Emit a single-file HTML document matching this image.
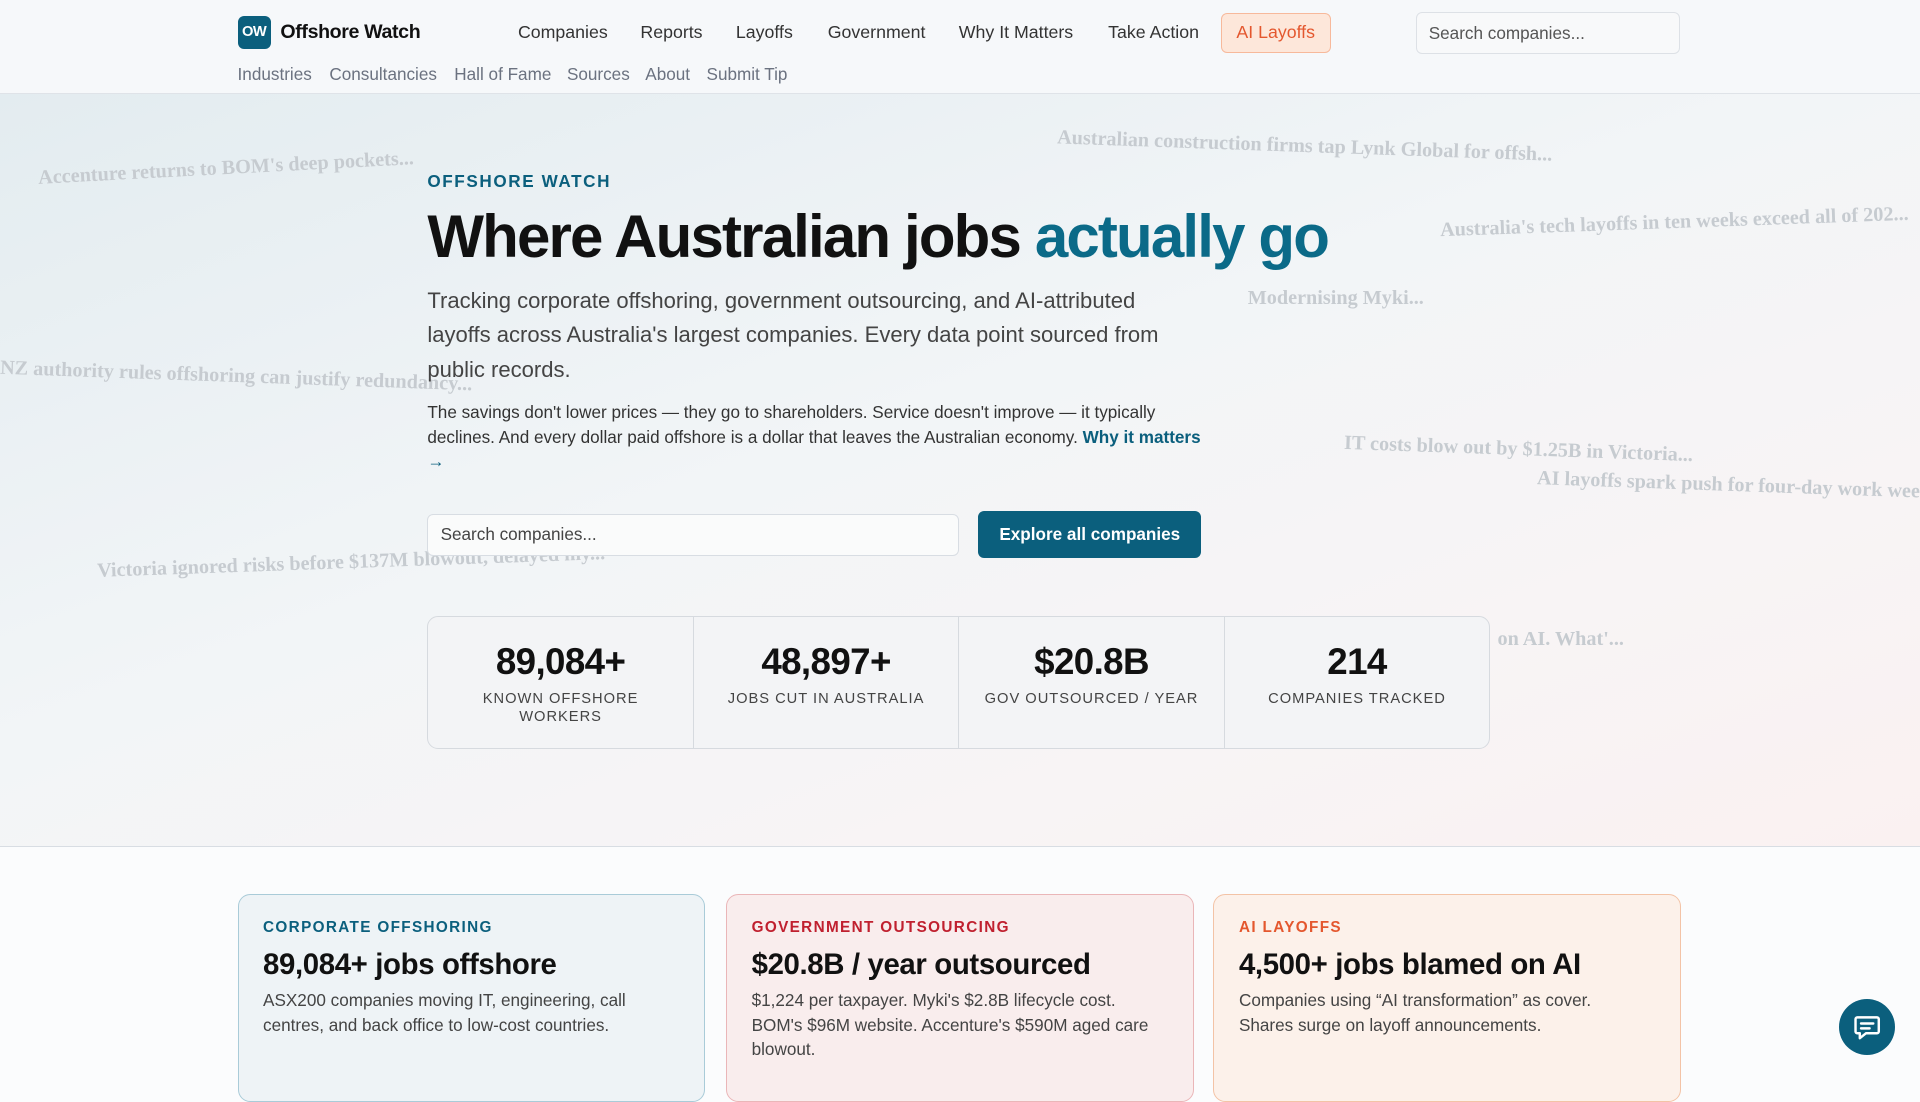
<!DOCTYPE html>
<html><head><meta charset="utf-8"><style>
html{zoom:1.22449}
body{margin:0;width:1568px;height:882px;overflow:hidden;font-family:"Liberation Sans",sans-serif;background:#fbfcfd;color:#111;position:relative}
.nav{position:absolute;left:0;top:0;width:1568px;height:76px;background:#f6f8fa;border-bottom:1px solid #dfe3e8;z-index:3}
.logo{position:absolute;left:194px;top:13px;width:27px;height:27px;border-radius:5px;background:#0b5f7d;color:#fff;font-weight:bold;font-size:12px;line-height:27px;text-align:center;letter-spacing:-.5px}
.brand{position:absolute;left:229px;top:17px;font-weight:bold;font-size:16px;letter-spacing:-.3px}
.m{position:absolute;top:18px;font-size:14.5px;color:#333}
.s{position:absolute;top:52px;font-size:14px;color:#6b7280}
.ai{position:absolute;left:997px;top:11px;width:88px;height:31px;border:1px solid #f7b99b;background:#fde7da;border-radius:5px;color:#e4572e;font-size:14.5px;text-align:center;line-height:30px}
.srch{position:absolute;left:1156px;top:10px;width:216px;height:34px;border:1px solid #dde1e6;border-radius:5px;background:#f8f9fa;font-size:14px;color:#555;line-height:33px;padding-left:10px;box-sizing:border-box}
.hero{position:absolute;left:0;top:77px;width:1568px;height:614px;background:linear-gradient(160deg,#e3ecf0 0%,#f2f5f7 45%,#f8f4f5 75%,#faf1f1 100%);border-bottom:1px solid #d8dde3}
.f{position:absolute;font-family:"Liberation Serif",serif;font-size:16.5px;font-weight:bold;color:#c6cbd0;white-space:nowrap}
.k{position:absolute;left:349px;top:140px;font-size:14px;letter-spacing:1.3px;color:#0b5f7d;font-weight:bold}
h1{position:absolute;left:349px;top:165px;margin:0;font-size:49px;letter-spacing:-1.5px;font-weight:bold}
h1 span{color:#0b6a88}
.p1{position:absolute;left:349px;top:232px;width:628px;font-size:18px;line-height:28px;color:#444}
.p2{position:absolute;left:349px;top:327px;width:651px;font-size:14px;line-height:20px;color:#333}
.p2 a{color:#0b5f7d;font-weight:bold}
.in{position:absolute;left:349px;top:420px;width:434px;height:34px;border:1px solid #d8dde3;border-radius:5px;background:#fafbfb;box-sizing:border-box;padding-left:10px;line-height:32px;font-size:14px;color:#444}
.btn{position:absolute;left:799px;top:417px;width:182px;height:39px;border-radius:5px;background:#0b5f7d;color:#fff;font-weight:bold;font-size:14px;text-align:center;line-height:39px}
.stats{position:absolute;left:349px;top:503px;width:868px;height:109px;border:1px solid #d6dadf;border-radius:9px;background:#f3f4f6;display:flex;box-sizing:border-box}
.st{flex:1;text-align:center;border-left:1px solid #d6dadf;padding-top:20px}
.st:first-child{border-left:none}
.st b{display:block;font-size:30px;letter-spacing:-.5px}
.st i{display:block;font-style:normal;font-size:12px;letter-spacing:.8px;color:#444;line-height:15px;margin-top:5px}
.card{position:absolute;top:730px;width:382px;height:170px;border-radius:10px;box-sizing:border-box;padding:20px 20px}
.card .t{font-size:12.5px;letter-spacing:1.1px;font-weight:bold}
.card .h{font-size:24px;font-weight:bold;margin-top:9px;letter-spacing:-.3px}
.card .d{font-size:14px;line-height:20px;color:#444;margin-top:5px}
.chat{position:absolute;left:1502px;top:816px;width:46px;height:46px;border-radius:50%;background:#0b5f7d}
</style></head><body>
<div class="nav">
<div class="logo">OW</div><div class="brand">Offshore Watch</div>
<div class="m" style="left:423px">Companies</div><div class="m" style="left:523px">Reports</div><div class="m" style="left:601px">Layoffs</div><div class="m" style="left:676px">Government</div><div class="m" style="left:783px">Why It Matters</div><div class="m" style="left:905px">Take Action</div>
<div class="ai">AI Layoffs</div><div class="srch">Search companies...</div>
<div class="s" style="left:194px">Industries</div><div class="s" style="left:269px">Consultancies</div><div class="s" style="left:371px">Hall of Fame</div><div class="s" style="left:463px">Sources</div><div class="s" style="left:527px">About</div><div class="s" style="left:577px">Submit Tip</div>
</div>
<div class="hero"></div>
<div class="f" style="left:31px;top:128px;transform:rotate(-3deg)">Accenture returns to BOM's deep pockets...</div>
<div class="f" style="left:863px;top:110px;transform:rotate(2deg)">Australian construction firms tap Lynk Global for offsh...</div>
<div class="f" style="left:1176px;top:172px;transform:rotate(-2deg)">Australia's tech layoffs in ten weeks exceed all of 202...</div>
<div class="f" style="left:1019px;top:234px">Modernising Myki...</div>
<div class="f" style="left:0px;top:298px;transform:rotate(2deg)">NZ authority rules offshoring can justify redundancy...</div>
<div class="f" style="left:1098px;top:358px;transform:rotate(2deg)">IT costs blow out by $1.25B in Victoria...</div>
<div class="f" style="left:1255px;top:387px;transform:rotate(2deg)">AI layoffs spark push for four-day work week</div>
<div class="f" style="left:79px;top:450px;transform:rotate(-2deg)">Victoria ignored risks before $137M blowout, delayed my...</div>
<div class="f" style="left:1223px;top:513px">on AI. What'...</div>
<div class="k">OFFSHORE WATCH</div>
<h1>Where Australian jobs <span>actually go</span></h1>
<div class="p1">Tracking corporate offshoring, government outsourcing, and AI-attributed layoffs across Australia's largest companies. Every data point sourced from public records.</div>
<div class="p2">The savings don't lower prices — they go to shareholders. Service doesn't improve — it typically declines. And every dollar paid offshore is a dollar that leaves the Australian economy. <a>Why it matters</a><br><a>→</a></div>
<div class="in">Search companies...</div><div class="btn">Explore all companies</div>
<div class="stats">
<div class="st"><b>89,084+</b><i>KNOWN OFFSHORE<br>WORKERS</i></div>
<div class="st"><b>48,897+</b><i>JOBS CUT IN AUSTRALIA</i></div>
<div class="st"><b>$20.8B</b><i>GOV OUTSOURCED / YEAR</i></div>
<div class="st"><b>214</b><i>COMPANIES TRACKED</i></div>
</div>
<div class="card" style="left:194px;background:#eef3f6;border:1px solid #a9cbd8"><div class="t" style="color:#0b5f7d">CORPORATE OFFSHORING</div><div class="h">89,084+ jobs offshore</div><div class="d">ASX200 companies moving IT, engineering, call centres, and back office to low-cost countries.</div></div>
<div class="card" style="left:593px;background:#f9eded;border:1px solid #eab6b8"><div class="t" style="color:#c0202f">GOVERNMENT OUTSOURCING</div><div class="h">$20.8B / year outsourced</div><div class="d">$1,224 per taxpayer. Myki's $2.8B lifecycle cost. BOM's $96M website. Accenture's $590M aged care blowout.</div></div>
<div class="card" style="left:991px;background:#fcf1ea;border:1px solid #f3c3a6"><div class="t" style="color:#e4572e">AI LAYOFFS</div><div class="h">4,500+ jobs blamed on AI</div><div class="d" style="width:300px">Companies using “AI transformation” as cover. Shares surge on layoff announcements.</div></div>
<div class="chat"><svg width="46" height="46" viewBox="0 0 46 46"><path d="M15 15h16a1.5 1.5 0 0 1 1.5 1.5v10a1.5 1.5 0 0 1-1.5 1.5h-9l-5 4v-4h-2a1.5 1.5 0 0 1-1.5-1.5v-10A1.5 1.5 0 0 1 15 15z" fill="none" stroke="#fff" stroke-width="2" stroke-linejoin="round"/><path d="M18 20h10M18 24h7" stroke="#fff" stroke-width="2" stroke-linecap="round"/></svg></div>
</body></html>
